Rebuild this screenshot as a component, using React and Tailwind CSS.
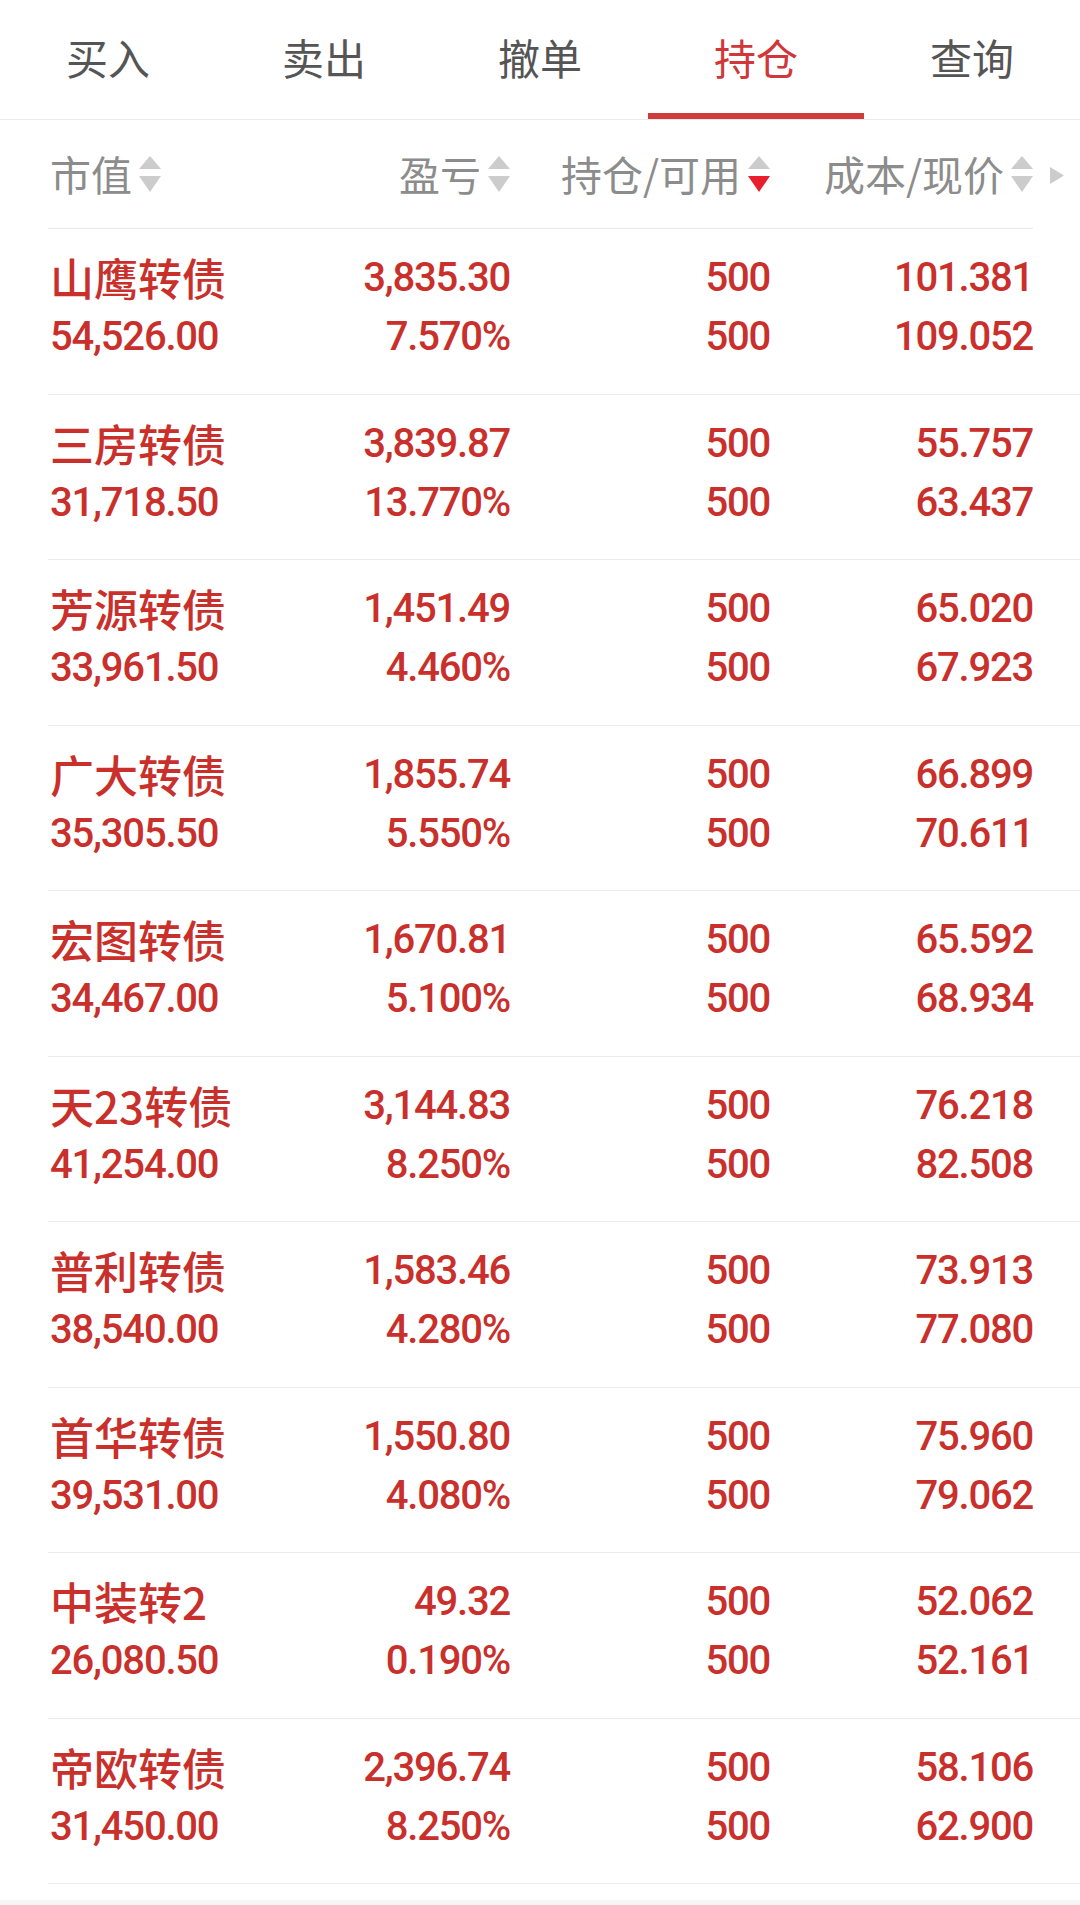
import React from 'react';

const tabs = ['买入', '卖出', '撤单', '持仓', '查询'];

const rows = [
    { name: '山鹰转债', value: '54,526.00', pl: '3,835.30', rate: '7.570%', cost: '101.381', price: '109.052' },
    { name: '三房转债', value: '31,718.50', pl: '3,839.87', rate: '13.770%', cost: '55.757', price: '63.437' },
    { name: '芳源转债', value: '33,961.50', pl: '1,451.49', rate: '4.460%', cost: '65.020', price: '67.923' },
    { name: '广大转债', value: '35,305.50', pl: '1,855.74', rate: '5.550%', cost: '66.899', price: '70.611' },
    { name: '宏图转债', value: '34,467.00', pl: '1,670.81', rate: '5.100%', cost: '65.592', price: '68.934' },
    { name: '天23转债', value: '41,254.00', pl: '3,144.83', rate: '8.250%', cost: '76.218', price: '82.508' },
    { name: '普利转债', value: '38,540.00', pl: '1,583.46', rate: '4.280%', cost: '73.913', price: '77.080' },
    { name: '首华转债', value: '39,531.00', pl: '1,550.80', rate: '4.080%', cost: '75.960', price: '79.062' },
    { name: '中装转2', value: '26,080.50', pl: '49.32', rate: '0.190%', cost: '52.062', price: '52.161' },
    { name: '帝欧转债', value: '31,450.00', pl: '2,396.74', rate: '8.250%', cost: '58.106', price: '62.900' },
];

const cjk = "font-['Noto_Sans_CJK_SC',sans-serif]";
const num = "font-['Roboto','Noto_Sans_CJK_SC',sans-serif] tracking-[-1.2px] font-medium";

// up/down sort triangles
const SortIcon = ({ active }) => (
    <svg width="22" height="36" viewBox="0 0 22 36" className="shrink-0 ml-[7px]">
        <polygon points="0,13 11,0 22,13" fill="#cccccc" />
        <polygon points="0,20 22,20 11,36" fill={active ? '#e8202e' : '#cccccc'} />
    </svg>
);

const App = () => {
    return (
        <div className="min-h-[1905px] bg-[#f5f5f5]">
            <div className="bg-white pb-[16px]">
                {/* Tabs */}
                <div className="flex border-b border-[#ececec]">
                    {tabs.map((t) => (
                        <div key={t} className="flex-1 flex flex-col items-center">
                            <div className={`h-[113px] flex items-center text-[42px] ${cjk} ${t === '持仓' ? 'text-[#d0363a]' : 'text-[#555555]'}`}>
                                {t}
                            </div>
                            <div className={`h-[6px] w-full ${t === '持仓' ? 'bg-[#d23b3c]' : ''}`} />
                        </div>
                    ))}
                </div>

                {/* Column header */}
                <div className="flex items-center h-[108px] pl-[50px]">
                    <div className={`grid grid-cols-[260px_200px_260px_263px] text-[41px] text-[#8c8c8c] ${cjk}`}>
                        <div className="flex items-center">市值<SortIcon /></div>
                        <div className="flex items-center justify-end">盈亏<SortIcon /></div>
                        <div className="flex items-center justify-end">持仓/可用<SortIcon active /></div>
                        <div className="flex items-center justify-end">成本/现价<SortIcon /></div>
                    </div>
                    <svg width="14" height="17" viewBox="0 0 14 17" className="ml-[17px] mt-[2px]">
                        <polygon points="0,0 14,8.5 0,17" fill="#cccccc" />
                    </svg>
                </div>
                <div className="h-px bg-[#e8e8e8] ml-[48px] mr-[47px]" />

                {/* Rows */}
                {rows.map((r) => (
                    <div key={r.name} className="ml-[48px] border-b border-[#ececec]">
                        <div className="h-[164.5px] pt-[19px] pl-[2px] grid grid-cols-[260px_200px_260px_263px] leading-[59px] text-[#c9302c]">
                            <div className="flex flex-col">
                                <span className={`text-[44px] font-medium ${cjk}`}>{r.name}</span>
                                <span className={`text-[40px] ${num}`}>{r.value}</span>
                            </div>
                            <div className={`flex flex-col items-end text-[40px] ${num}`}>
                                <span>{r.pl}</span>
                                <span>{r.rate}</span>
                            </div>
                            <div className={`flex flex-col items-end text-[40px] ${num}`}>
                                <span>500</span>
                                <span>500</span>
                            </div>
                            <div className={`flex flex-col items-end text-[40px] ${num}`}>
                                <span>{r.cost}</span>
                                <span>{r.price}</span>
                            </div>
                        </div>
                    </div>
                ))}
            </div>
        </div>
    );
};

export default App;
